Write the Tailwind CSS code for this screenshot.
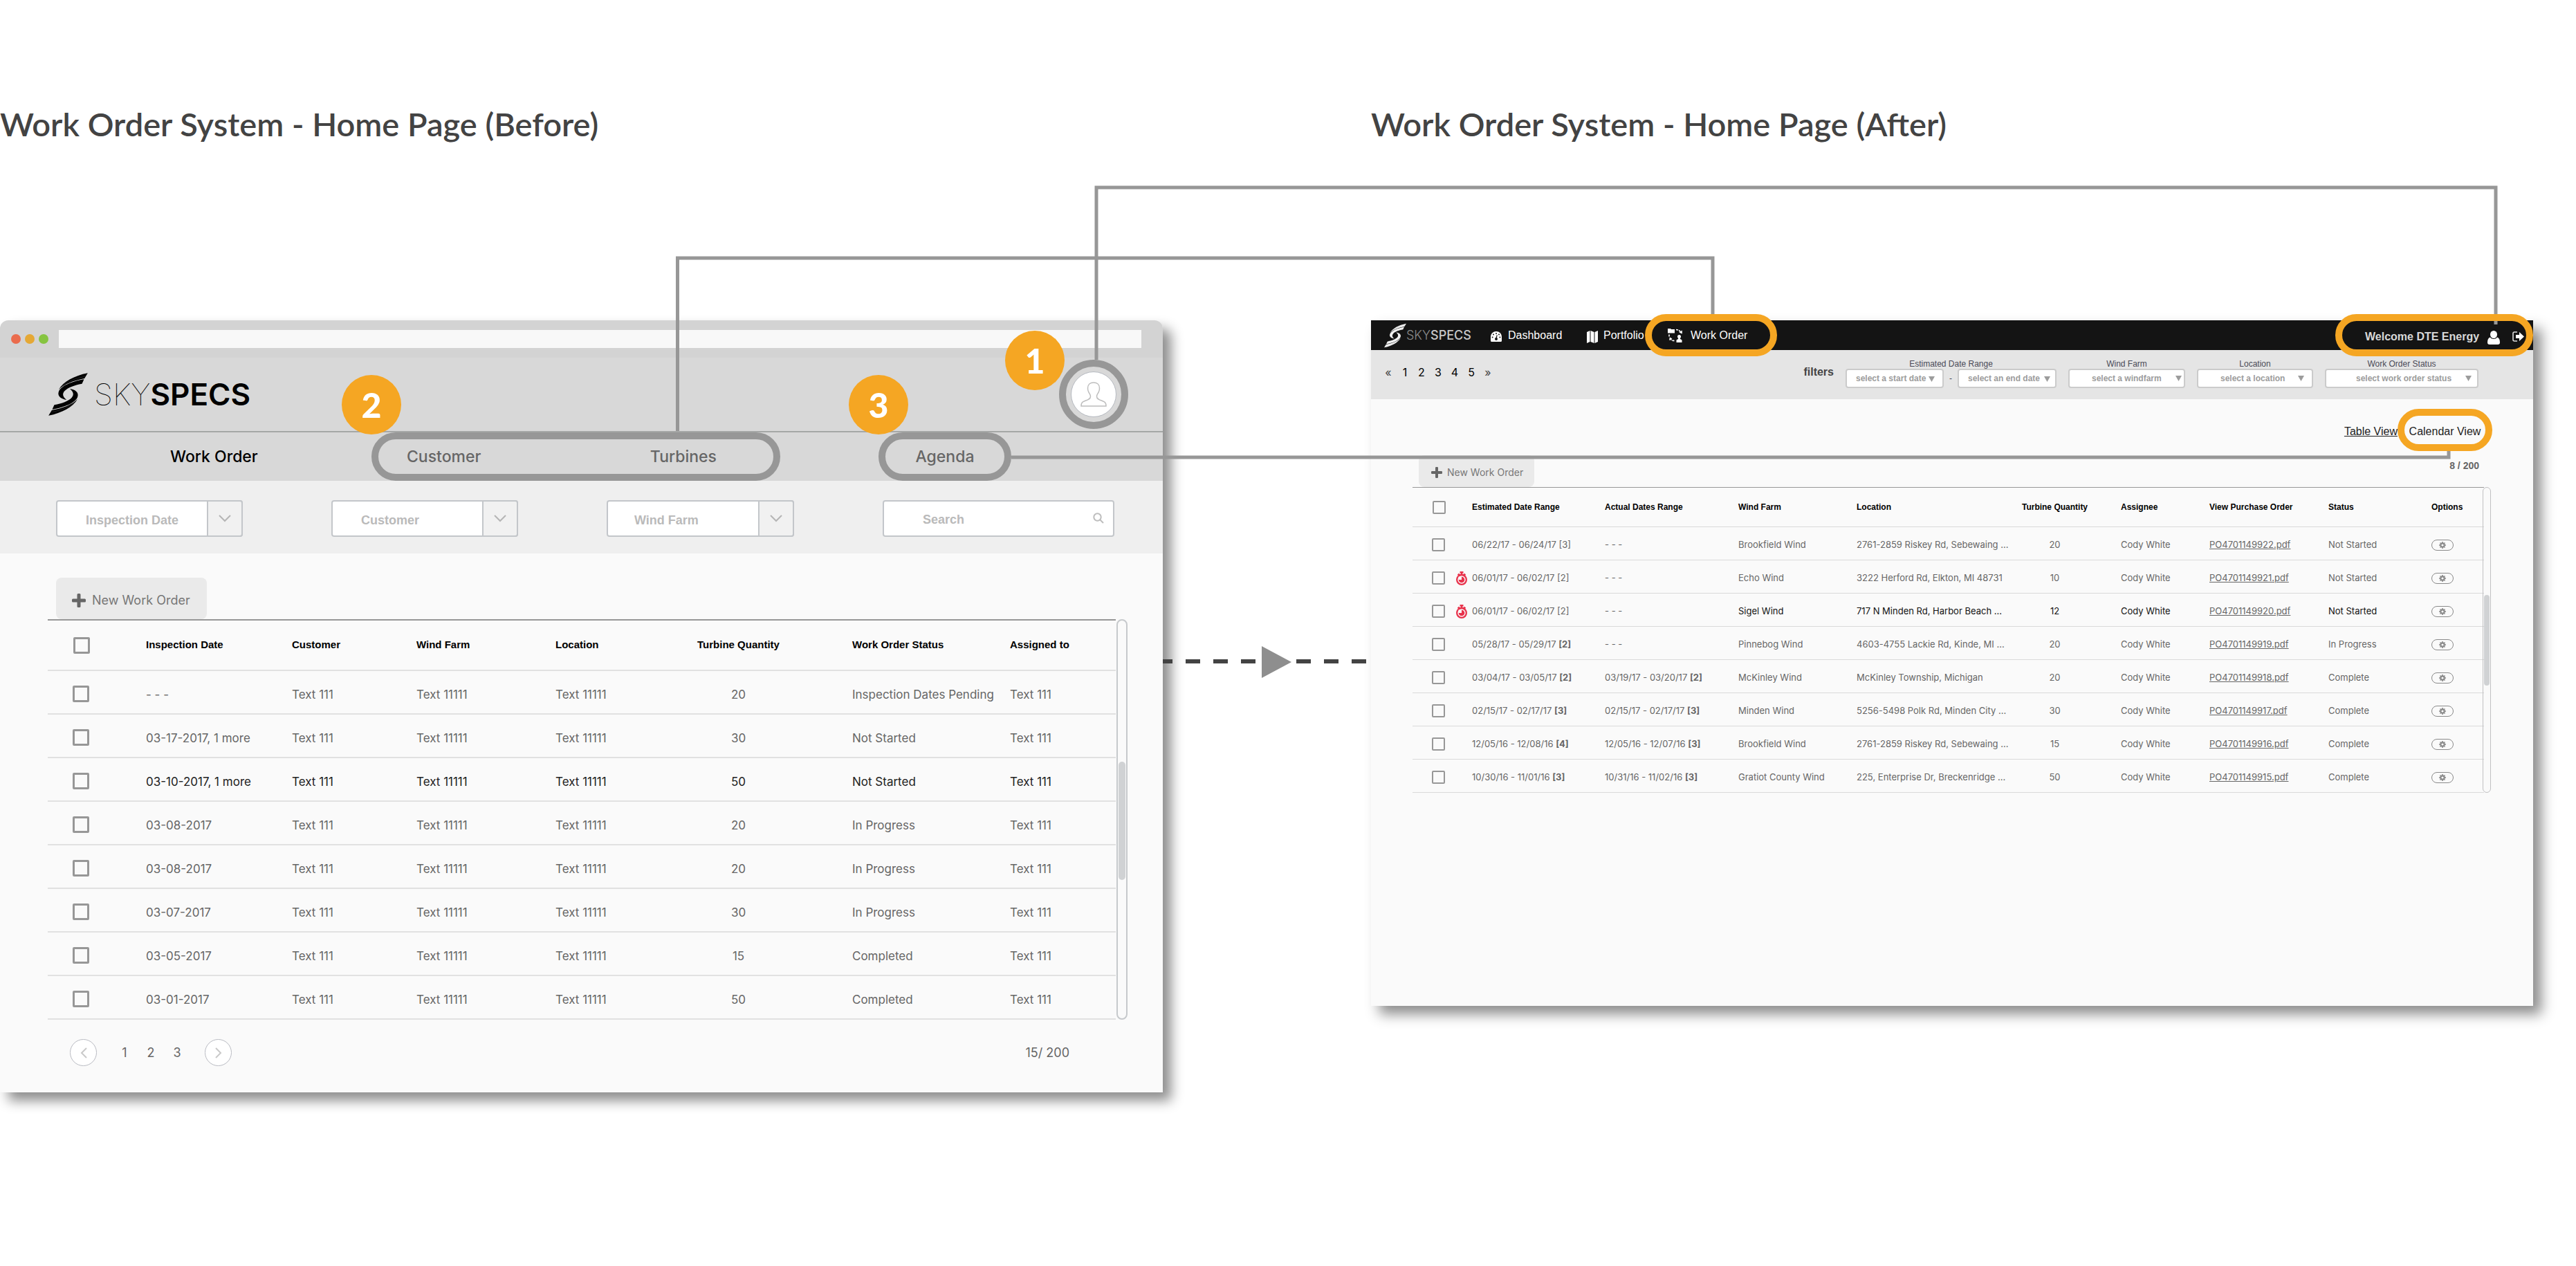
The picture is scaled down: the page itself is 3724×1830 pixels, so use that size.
<!DOCTYPE html>
<html lang="en">
<head>
<meta charset="utf-8">
<meta name="viewport" content="width=device-width, initial-scale=1">
<title>Work Order System - Home Page</title>
<script src="https://cdn.jsdelivr.net/npm/@tailwindcss/browser@4"></script>
</head>
<body class="bg-white font-['Inter',sans-serif] text-[#666]">

<!-- shared icons -->
<svg class="hidden" aria-hidden="true">
  <symbol id="mark" viewBox="30 26 170 186">
    <g id="mark-half">
      <path d="M200 27C142 38 94 64 74 99C98 74 138 59 186 50Z"/>
      <path d="M184 54C128 63 82 84 74 108C67 128 86 140 108 143C92 130 88 117 100 104C113 90 142 79 175 73Z"/>
    </g>
    <use href="#mark-half" transform="rotate(180 115 119)"/>
    <path d="M188 42C140 50 104 68 88 84M42 196C90 188 126 170 142 154" fill="none" stroke="#8886" stroke-width="2"/>
  </symbol>
  <symbol id="plus" viewBox="0 0 20 20"><path d="M7.500 1.500Q7.500 0 9 0h2q1.500 0 1.500 1.500v6h6q1.500 0 1.500 1.500v2q0 1.500-1.500 1.500h-6v6q0 1.500-1.500 1.500H9q-1.500 0-1.500-1.500v-6h-6Q0 12.500 0 11V9q0-1.500 1.500-1.500h6z"/></symbol>
  <symbol id="clock" viewBox="0 0 16 20">
    <path d="M5.500 0h5v2.600H9.300V4h1.200l1.600-1.300 2 1.800-1 1.500H3L1.900 4.500l2-1.800L5.500 4h1.200V2.600H5.500z"/>
    <circle cx="8" cy="12" r="8"/>
    <circle cx="8" cy="12" r="5" fill="none" stroke="#fafafa" stroke-width="1.400"/>
    <path d="M3.500 7.500H8V12H3.500z" fill="#fafafa"/>
    <path d="M8 12V8.200a3.800 3.800 0 1 1-3.800 3.800z"/>
  </symbol>
  <symbol id="gear" viewBox="0 0 10 10">
    <circle cx="5" cy="5" r="2.700" fill="none" stroke="currentColor" stroke-width="2"/>
    <path d="M5 0v10M0 5h10M1.500 1.500l7 7M8.500 1.500l-7 7" stroke="currentColor" stroke-width="1.600"/>
    <circle cx="5" cy="5" r="1.600" fill="#fafafa"/>
  </symbol>
</svg>

<main class="relative grid grid-cols-[1681fr_301fr_1680fr_62fr] items-start pt-[147px] pb-[251px]">

  <!-- BEFORE -->
  <section>
    <h1 class="mb-64 h-[60px] whitespace-nowrap font-['Lato',sans-serif] text-[47px] leading-[64px] font-semibold text-[#434343]">Work Order System - Home Page (Before)</h1>

    <div class="overflow-visible rounded-t-xl bg-[#fafafa] shadow-[12px_12px_18px_rgba(0,0,0,0.45)]">
      <div class="flex h-[54px] items-center rounded-t-xl bg-[#d3d3d3] pr-[31px] pl-4">
        <span class="mr-[6px] size-[14px] rounded-full bg-[#ea6c4d]"></span>
        <span class="mr-[6px] size-[14px] rounded-full bg-[#e5a835]"></span>
        <span class="mr-[15px] size-[14px] rounded-full bg-[#86c440]"></span>
        <input type="text" aria-label="Address" class="h-[26px] min-w-0 flex-1 bg-[#f8f8f8]">
      </div>

      <header class="flex h-[108px] items-center justify-between border-b-2 border-[#a5a7a6] bg-[#d8d8d8] pr-[50px] pl-[70px]">
        <a href="#" class="flex items-center gap-[9px] text-black">
          <svg class="h-[62px] w-[57px]" fill="currentColor"><use href="#mark"/></svg>
          <span class="text-[44px] leading-[60px]"><span class="font-thin">SKY</span><span class="font-semibold">SPECS</span></span>
        </a>
        <div class="relative">
          <button aria-label="Account" class="flex size-[100px] items-center justify-center rounded-full border-10 border-[#979797]">
            <span class="flex size-[66px] items-center justify-center rounded-full border border-[#b5b9c0] bg-white">
              <svg class="h-9 w-[38px]" viewBox="0 0 38 36" fill="none" stroke="#bdbdbd" stroke-width="1.500"><path d="M19 1c5 0 8.500 3 8.500 8 0 2 0 3-1 5-1 3-3 4-3 7 0 4 4 5 8 6.500 3.500 1.300 5.500 2.500 5.500 7.500H1c0-5 2-6.200 5.500-7.500 4-1.500 8-2.500 8-6.500 0-3-2-4-3-7-1-2-1-3-1-5 0-5 3.500-8 8.500-8z"/></svg>
            </span>
          </button>
          <span class="absolute -top-[42px] -left-[78px] flex size-[86px] items-center justify-center rounded-full bg-[#f5a623] font-['Lato',sans-serif] text-[50px] font-black text-white">1</span>
        </div>
      </header>

      <nav class="grid h-[70px] grid-cols-[537fr_591fr_142fr_192fr_219fr] bg-[#d8d8d8] text-[23px] font-medium text-[#666]">
        <a href="#" class="self-center pl-[246px] text-black">Work Order</a>
        <div class="relative flex items-center justify-between rounded-full border-10 border-[#979797] pr-[82px] pl-[41px]">
          <a href="#">Customer</a>
          <a href="#">Turbines</a>
          <span class="absolute -top-[93px] -left-[53px] z-20 flex size-[86px] items-center justify-center rounded-full bg-[#f5a623] font-['Lato',sans-serif] text-[50px] font-black text-white">2</span>
        </div>
        <div class="relative col-start-4 flex items-center justify-center rounded-full border-10 border-[#979797]">
          <a href="#">Agenda</a>
          <span class="absolute -top-[93px] -left-[53px] z-20 flex size-[86px] items-center justify-center rounded-full bg-[#f5a623] font-['Lato',sans-serif] text-[50px] font-black text-white">3</span>
        </div>
      </nav>

      <form class="grid h-[105px] grid-cols-[270fr_270fr_271fr_335fr] gap-[128px] bg-[#efefef] pt-7 pr-[70px] pl-[81px] font-['Liberation_Sans',sans-serif] text-lg font-bold text-[#bababa]">
        <label class="relative h-[53px]">
          <select aria-label="Inspection Date" class="size-full appearance-none rounded border-2 border-[#c3c6ca] bg-white pt-1 pl-[41px]"><option>Inspection Date</option></select>
          <span class="pointer-events-none absolute inset-y-0 right-0 flex w-[52px] items-center justify-center rounded-r border-2 border-[#c3c6ca] bg-[#f1f1f1]"><svg class="h-[11px] w-[18px]" viewBox="0 0 18 11" fill="none" stroke="#b5b5b5" stroke-width="2"><path d="M1 1l8 8 8-8"/></svg></span>
        </label>
        <label class="relative h-[53px]">
          <select aria-label="Customer" class="size-full appearance-none rounded border-2 border-[#c3c6ca] bg-white pt-1 pl-[41px]"><option>Customer</option></select>
          <span class="pointer-events-none absolute inset-y-0 right-0 flex w-[52px] items-center justify-center rounded-r border-2 border-[#c3c6ca] bg-[#f1f1f1]"><svg class="h-[11px] w-[18px]" viewBox="0 0 18 11" fill="none" stroke="#b5b5b5" stroke-width="2"><path d="M1 1l8 8 8-8"/></svg></span>
        </label>
        <label class="relative h-[53px]">
          <select aria-label="Wind Farm" class="size-full appearance-none rounded border-2 border-[#c3c6ca] bg-white pt-1 pl-[38px]"><option>Wind Farm</option></select>
          <span class="pointer-events-none absolute inset-y-0 right-0 flex w-[52px] items-center justify-center rounded-r border-2 border-[#c3c6ca] bg-[#f1f1f1]"><svg class="h-[11px] w-[18px]" viewBox="0 0 18 11" fill="none" stroke="#b5b5b5" stroke-width="2"><path d="M1 1l8 8 8-8"/></svg></span>
        </label>
        <label class="relative h-[53px]">
          <input type="text" aria-label="Search" placeholder="Search" class="size-full rounded border-2 border-[#c3c6ca] bg-white pt-1 pl-14 placeholder:text-[#bababa]">
          <svg class="absolute top-[18px] right-[15px] size-4" viewBox="0 0 16 16" fill="none" stroke="#bdbdbd" stroke-width="2"><circle cx="6.500" cy="6.500" r="5.200"/><path d="M10.500 10.500L15 15"/></svg>
        </label>
      </form>

      <div class="pt-[35px] pl-[81px]">
        <button class="flex h-[60px] w-[218px] items-center gap-[9px] rounded-lg bg-[#eaeaea] pt-[6px] pl-[23px] text-lg text-[#777]">
          <svg class="size-5" fill="#666"><use href="#plus"/></svg>New Work Order
        </button>
      </div>

      <div class="mr-[51px] ml-[69px] flex">
        <table class="min-w-0 flex-1 table-fixed border-separate border-spacing-0 border-t-2 border-[#979797] text-left text-[17px]">
          <colgroup>
            <col class="w-[142px]"><col class="w-[211px]"><col class="w-[180px]"><col class="w-[201px]"><col class="w-[100px]"><col class="w-[329px]"><col class="w-[228px]"><col class="w-[153px]">
          </colgroup>
          <thead>
            <tr class="h-[73px] font-['Liberation_Sans',sans-serif] text-[15px] text-black">
              <th class="border-b-2 border-[#e1e1e1] pl-[37px]"><input type="checkbox" aria-label="Select all" class="block size-6 appearance-none rounded-xs border-3 border-[#979797]"></th>
              <th class="border-b-2 border-[#e1e1e1]">Inspection Date</th>
              <th class="border-b-2 border-[#e1e1e1]">Customer</th>
              <th class="border-b-2 border-[#e1e1e1]">Wind Farm</th>
              <th class="border-b-2 border-[#e1e1e1]">Location</th>
              <th class="border-b-2 border-[#e1e1e1] text-center">Turbine Quantity</th>
              <th class="border-b-2 border-[#e1e1e1]">Work Order Status</th>
              <th class="border-b-2 border-[#e1e1e1]">Assigned to</th>
            </tr>
          </thead>
          <tbody id="before-rows"></tbody>
        </table>
        <div class="ml-px flex w-4 flex-col items-center rounded-full border-2 border-[#c6c9cc] pt-[204px]"><span class="h-[171px] w-[10px] rounded-full bg-[#d0d2d4]"></span></div>
      </div>

      <footer class="flex items-center justify-between pt-7 pr-[135px] pb-[38px] pl-[101px] text-lg">
        <div class="flex items-center">
          <button aria-label="Previous page" class="mr-[21px] flex size-[39px] items-center justify-center rounded-full border border-[#b9bbc2] bg-white"><svg class="h-4 w-[10px]" viewBox="0 0 10 16" fill="none" stroke="#c9c9c9" stroke-width="2"><path d="M9 1L2 8l7 7"/></svg></button>
          <button class="w-[38px]">1</button><button class="w-[38px]">2</button><button class="w-[38px]">3</button>
          <button aria-label="Next page" class="ml-[21px] flex size-[39px] items-center justify-center rounded-full border border-[#b9bbc2] bg-white"><svg class="h-4 w-[10px]" viewBox="0 0 10 16" fill="none" stroke="#c9c9c9" stroke-width="2"><path d="M1 1l7 7-7 7"/></svg></button>
        </div>
        <span>15/ 200</span>
      </footer>
    </div>
  </section>

  <!-- AFTER -->
  <section class="col-start-3">
    <h1 class="mb-64 h-[60px] whitespace-nowrap font-['Lato',sans-serif] text-[47px] leading-[64px] font-semibold text-[#434343]">Work Order System - Home Page (After)</h1>

    <div class="bg-[#fafafa] pb-[308px] shadow-[12px_12px_18px_rgba(0,0,0,0.45)]">
      <header class="flex h-[43px] items-center justify-between bg-[#141414] pl-[19px]">
        <nav class="flex items-center font-['Liberation_Sans',sans-serif] text-base text-white">
          <a href="#" class="flex w-[154px] items-center font-['Inter',sans-serif]">
            <svg class="h-[40px] w-8" viewBox="0 0 32 40" preserveAspectRatio="none" fill="#f2f2f2"><use href="#mark" width="32" height="40"/></svg>
            <span class="text-[18px] leading-6"><span class="font-light text-[#8a8a8a]">SKY</span><span class="font-medium text-[#c8c8c8]">SPECS</span></span>
          </a>
          <a href="#" class="flex w-[139px] items-center gap-[9px]">
            <svg class="mt-1 h-[15px] w-4" viewBox="0 0 16 15" fill="#fff"><path d="M8 0a8 8 0 0 1 8 8v5.500q0 1.500-1.500 1.500h-13Q0 15 0 13.500V8a8 8 0 0 1 8-8z"/><g fill="#141414"><circle cx="8" cy="3" r="1"/><circle cx="4" cy="4.600" r="1"/><circle cx="12" cy="4.600" r="1"/><circle cx="2.600" cy="8.600" r="1"/><circle cx="13.400" cy="8.600" r="1"/><circle cx="8" cy="11" r="2"/><path d="M7.300 10l1.500-5 .9.200L8.700 10.500z"/></g></svg>
            Dashboard
          </a>
          <a href="#" class="flex w-[84px] items-center gap-2">
            <svg class="mt-1 h-[18px] w-4 shrink-0" viewBox="0 0 16 18" fill="#fff"><path d="M0 2l4.500-2v16L0 18zM5.500 0l5 2v16l-5-2zM11.500 2L16 0v16l-4.500 2z"/></svg>
            Portfolio
          </a>
          <a href="#" class="z-20 -my-[9px] flex h-[61px] w-[191px] items-center gap-[11px] rounded-full border-10 border-[#f5a623] pl-[23px] whitespace-nowrap">
            <svg class="h-[21px] w-[22px]" viewBox="0 0 22 21" fill="#fff"><path d="M0 1h4l1 1h5v5.500H0z"/><circle cx="16.500" cy="12.500" r="2.500"/><path d="M15.300 14h2.400l.3 2 2.500 1.500V21h-8v-3.500L15 16z"/><path d="M12 2.500c3 0 5 1 6.500 3.500M9.500 18.500c-3 0-4.500-.8-6-3M2 9.500v3.500" fill="none" stroke="#fff" stroke-width="1.600" stroke-dasharray="3 1.200"/><path d="M20.800 3.500v5l-4.500-2zM2 18l.8-4.500 3.700 2z"/></svg>
            Work Order
          </a>
        </nav>
        <div class="z-20 -my-[9px] flex h-[61px] w-[286px] items-center rounded-full border-10 border-[#f5a623] pl-[33px] font-['Liberation_Sans',sans-serif] text-base font-bold text-[#d9d9d9]">
          <span class="mt-1 mr-3 whitespace-nowrap">Welcome DTE Energy</span>
          <svg class="mt-[6px] mr-[18px] h-5 w-[18px] shrink-0" viewBox="0 0 18 20" fill="#fff"><ellipse cx="9" cy="5.500" rx="5" ry="5.500"/><path d="M4 9.500c1.200 1.800 3 2.500 5 2.500s3.800-.7 5-2.500c3 1 4 4 4 7.500q0 3-3 3H3q-3 0-3-3c0-3.500 1-6.500 4-7.500z"/></svg>
          <button aria-label="Log out"><svg class="mt-1 h-[15px] w-[17px]" viewBox="0 0 17 15"><path d="M7 1H3Q1 1 1 3v9q0 2 2 2h4" fill="none" stroke="#ddd" stroke-width="1.600"/><path d="M5 5h5V1l7 6.500L10 14v-4H5z" fill="#fff"/></svg></button>
        </div>
      </header>

      <div class="flex h-[71px] items-start justify-between bg-[#e5e5e5] pt-[13px] pr-[79px] pl-[13px]">
        <div class="mt-[7px] flex text-base leading-6 text-black">
          <button class="w-6 text-[#444]">«</button><button class="w-6">1</button><button class="w-6">2</button><button class="w-6">3</button><button class="w-6">4</button><button class="w-6">5</button><button class="w-6 text-[#444]">»</button>
        </div>
        <form class="flex gap-[17px] text-center font-['Liberation_Sans',sans-serif] text-xs leading-[14px] text-[#4a4a57]">
          <span class="mt-[9px] text-base leading-5 font-bold text-[#444]">filters</span>
          <fieldset>
            <legend class="mx-auto h-[14px]">Estimated Date Range</legend>
            <div class="flex">
              <div class="relative h-7 w-[142px]">
                <select aria-label="Start date" class="size-full appearance-none rounded border-2 border-[#cbcbcb] bg-white pl-[13px] font-bold text-[#9c9c9c]"><option>select a start date</option></select>
                <svg class="pointer-events-none absolute top-[11px] right-[13px] h-2 w-[9px]" viewBox="0 0 9 8" fill="#9c9c9c"><path d="M0 0h9L4.500 8z"/></svg>
              </div>
              <span class="w-5 leading-7">-</span>
              <div class="relative h-7 w-[143px]">
                <select aria-label="End date" class="size-full appearance-none rounded border-2 border-[#cbcbcb] bg-white pl-[13px] font-bold text-[#9c9c9c]"><option>select an end date</option></select>
                <svg class="pointer-events-none absolute top-[11px] right-[9px] h-2 w-[9px]" viewBox="0 0 9 8" fill="#9c9c9c"><path d="M0 0h9L4.500 8z"/></svg>
              </div>
            </div>
          </fieldset>
          <label class="relative w-[169px]">Wind Farm
            <select class="block h-7 w-full appearance-none rounded border-2 border-[#cbcbcb] bg-white pl-8 font-bold text-[#9c9c9c]"><option>select a windfarm</option></select>
            <svg class="pointer-events-none absolute top-6 right-[5px] h-2 w-[9px]" viewBox="0 0 9 8" fill="#9c9c9c"><path d="M0 0h9L4.500 8z"/></svg>
          </label>
          <label class="relative w-[168px]">Location
            <select class="block h-7 w-full appearance-none rounded border-2 border-[#cbcbcb] bg-white pl-8 font-bold text-[#9c9c9c]"><option>select a location</option></select>
            <svg class="pointer-events-none absolute top-6 right-[13px] h-2 w-[9px]" viewBox="0 0 9 8" fill="#9c9c9c"><path d="M0 0h9L4.500 8z"/></svg>
          </label>
          <label class="relative w-[222px]">Work Order Status
            <select class="block h-7 w-full appearance-none rounded border-2 border-[#cbcbcb] bg-white pl-[43px] font-bold text-[#9c9c9c]"><option>select work order status</option></select>
            <svg class="pointer-events-none absolute top-6 right-[10px] h-2 w-[9px]" viewBox="0 0 9 8" fill="#9c9c9c"><path d="M0 0h9L4.500 8z"/></svg>
          </label>
        </form>
      </div>

      <div class="flex items-center justify-end pt-[14px] pr-[59px] font-['Liberation_Sans',sans-serif] text-base text-[#222]">
        <a href="#" class="mt-1 underline">Table View</a>
        <a href="#" class="z-20 flex h-[61px] w-[137px] items-center justify-center rounded-full border-10 border-[#f5a623] pt-1 whitespace-nowrap">Calendar View</a>
      </div>

      <div class="mt-[6px] flex items-start justify-between pr-[78px] pl-[69px]">
        <button class="flex h-[46px] w-[167px] items-center gap-[7px] rounded-lg bg-[#eaeaea] pt-[3px] pl-[18px] text-sm text-[#777]">
          <svg class="size-4" fill="#666"><use href="#plus"/></svg>New Work Order
        </button>
        <span class="mt-[5px] font-['Liberation_Sans',sans-serif] text-sm leading-5 font-bold">8 / 200</span>
      </div>

      <div class="mr-[61px] ml-[60px] flex">
        <table class="min-w-0 flex-1 table-fixed border-separate border-spacing-0 border-t border-[#979797] text-left text-[13px]">
          <colgroup>
            <col class="w-[86px]"><col class="w-[192px]"><col class="w-[193px]"><col class="w-[171px]"><col class="w-[225px]"><col class="w-[157px]"><col class="w-[128px]"><col class="w-[172px]"><col class="w-[149px]"><col class="w-[76px]">
          </colgroup>
          <thead>
            <tr class="h-[57px] font-['Liberation_Sans',sans-serif] text-xs whitespace-nowrap text-black">
              <th class="border-b border-[#dadada] pl-[29px]"><input type="checkbox" aria-label="Select all" class="block size-[19px] appearance-none rounded-xs border-2 border-[#979797]"></th>
              <th class="border-b border-[#dadada]">Estimated Date Range</th>
              <th class="border-b border-[#dadada]">Actual Dates Range</th>
              <th class="border-b border-[#dadada]">Wind Farm</th>
              <th class="border-b border-[#dadada]">Location</th>
              <th class="border-b border-[#dadada] pr-[34px] text-center">Turbine Quantity</th>
              <th class="border-b border-[#dadada]">Assignee</th>
              <th class="border-b border-[#dadada]">View Purchase Order</th>
              <th class="border-b border-[#dadada]">Status</th>
              <th class="border-b border-[#dadada]">Options</th>
            </tr>
          </thead>
          <tbody id="after-rows"></tbody>
        </table>
        <div class="-ml-[2px] flex w-3 flex-col items-center self-stretch rounded-full border border-[#c0c0c2] pt-[155px]"><span class="h-[131px] w-2 rounded-full bg-[#d0d2d4]"></span></div>
      </div>
    </div>
  </section>

  <!-- connectors between the two windows -->
  <svg class="pointer-events-none absolute top-0 left-0 z-10 h-[1830px] w-full" viewBox="0 0 3724 1830" preserveAspectRatio="none" fill="none" stroke="#979797" stroke-width="5" aria-hidden="true">
    <path d="M979.500 623V373H2476V454"/>
    <path d="M1585 520V271H3608V469"/>
    <path d="M1462 661H3540V652"/>
    <path d="M1681 956H1695M1714 956H1824M1874 956H1980" stroke="#434343" stroke-width="6" stroke-dasharray="21 19"/>
    <path d="M1824 934v46l43-23z" fill="#8e8e8e" stroke="none"/>
  </svg>
</main>

<script>
const before = [
  ['- - -', '20', 'Inspection Dates Pending'],
  ['03-17-2017, 1 more', '30', 'Not Started'],
  ['03-10-2017, 1 more', '50', 'Not Started', true],
  ['03-08-2017', '20', 'In Progress'],
  ['03-08-2017', '20', 'In Progress'],
  ['03-07-2017', '30', 'In Progress'],
  ['03-05-2017', '15', 'Completed'],
  ['03-01-2017', '50', 'Completed'],
];
document.getElementById('before-rows').innerHTML = before.map(([date, qty, status, active]) => {
  const c = 'border-b-2 border-[#e1e1e1] whitespace-nowrap';
  return `<tr class="h-[63px] ${active ? 'text-[#222]' : ''}">
    <td class="${c} pt-[5px] pl-9"><input type="checkbox" aria-label="Select ${date}" class="block size-6 appearance-none rounded-xs border-3 border-[#979797]"></td>
    <td class="${c} pt-2">${date}</td>
    <td class="${c} pt-2">Text 111</td>
    <td class="${c} pt-2">Text 11111</td>
    <td class="${c} pt-2">Text 11111</td>
    <td class="${c} pt-2 text-center">${qty}</td>
    <td class="${c} pt-2">${status}</td>
    <td class="${c} pt-2">Text 111</td></tr>`;
}).join('');

const after = [
  ['06/22/17 - 06/24/17 [3]', '- - -', 'Brookfield Wind', '2761-2859 Riskey Rd, Sebewaing ...', '20', '22', 'Not Started'],
  ['06/01/17 - 06/02/17 [2]', '- - -', 'Echo Wind', '3222 Herford Rd, Elkton, MI 48731', '10', '21', 'Not Started', 'late'],
  ['06/01/17 - 06/02/17 [2]', '- - -', 'Sigel Wind', '717 N Minden Rd, Harbor Beach ...', '12', '20', 'Not Started', 'late active'],
  ['05/28/17 - 05/29/17 <b>[2]</b>', '- - -', 'Pinnebog Wind', '4603-4755 Lackie Rd, Kinde, MI ...', '20', '19', 'In Progress'],
  ['03/04/17 - 03/05/17 <b>[2]</b>', '03/19/17 - 03/20/17 <b>[2]</b>', 'McKinley Wind', 'McKinley Township, Michigan', '20', '18', 'Complete'],
  ['02/15/17 - 02/17/17 <b>[3]</b>', '02/15/17 - 02/17/17 <b>[3]</b>', 'Minden Wind', '5256-5498 Polk Rd, Minden City ...', '30', '17', 'Complete'],
  ['12/05/16 - 12/08/16 <b>[4]</b>', '12/05/16 - 12/07/16 <b>[3]</b>', 'Brookfield Wind', '2761-2859 Riskey Rd, Sebewaing ...', '15', '16', 'Complete'],
  ['10/30/16 - 11/01/16 <b>[3]</b>', '10/31/16 - 11/02/16 <b>[3]</b>', 'Gratiot County Wind', '225, Enterprise Dr, Breckenridge ...', '50', '15', 'Complete'],
];
document.getElementById('after-rows').innerHTML = after.map(([est, act, farm, loc, qty, po, status, flags = '']) => {
  const c = 'border-b border-[#dadada] pt-1 whitespace-nowrap';
  const t = flags.includes('active') ? 'text-[#111]' : '';
  return `<tr class="h-12">
    <td class="${c} pl-7"><div class="flex items-center gap-4"><input type="checkbox" aria-label="Select ${farm}" class="size-[19px] appearance-none rounded-xs border-2 border-[#979797]">${flags.includes('late') ? '<svg class="h-5 w-4" fill="#e8334c"><use href="#clock"/></svg>' : ''}</div></td>
    <td class="${c}">${est}</td>
    <td class="${c}">${act}</td>
    <td class="${c} ${t}">${farm}</td>
    <td class="${c} ${t}">${loc}</td>
    <td class="${c} ${t} pr-[34px] text-center">${qty}</td>
    <td class="${c} ${t}">Cody White</td>
    <td class="${c}"><a href="#" class="underline">PO47011499${po}.pdf</a></td>
    <td class="${c} ${t}">${status}</td>
    <td class="${c}"><button aria-label="Options" class="flex h-4 w-8 items-center justify-center rounded-full border border-[#8a8a8a] text-[#8a8a8a]"><svg class="size-[10px]"><use href="#gear"/></svg></button></td></tr>`;
}).join('');
</script>
</body>
</html>
